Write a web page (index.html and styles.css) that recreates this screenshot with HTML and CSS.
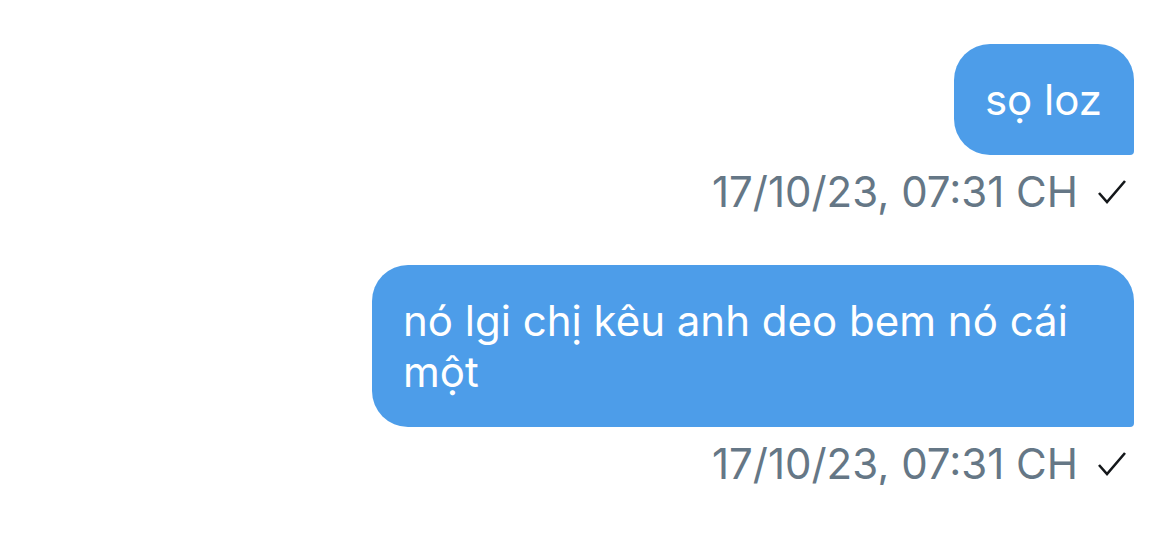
FILE: index.html
```html
<!DOCTYPE html>
<html lang="vi">
<head>
    <meta charset="UTF-8">
    <meta name="viewport" content="width=device-width, initial-scale=1.0">
    <title>Tin nhắn</title>
    <link rel="stylesheet" href="styles.css">
</head>
<body>
    <div class="chat">
        <div class="message">
            <div class="bubble">sọ loz</div>
            <div class="meta">
                <span class="time">17/10/23, 07:31 CH</span>
                <svg class="check" viewBox="0 0 28 26" width="28" height="26"><path d="M1 14 L9 23 L27 2" fill="none" stroke="#14171a" stroke-width="2.6"/></svg>
            </div>
        </div>
        <div class="message">
            <div class="bubble">nó lgi chị kêu anh deo bem nó cái một</div>
            <div class="meta">
                <span class="time">17/10/23, 07:31 CH</span>
                <svg class="check" viewBox="0 0 28 26" width="28" height="26"><path d="M1 14 L9 23 L27 2" fill="none" stroke="#14171a" stroke-width="2.6"/></svg>
            </div>
        </div>
    </div>
</body>
</html>
```

FILE: styles.css
```css
body {
    margin: 0;
    padding: 0;
    background: #fff;
    font-family: 'Inter', 'Noto Sans', sans-serif;
}
.chat {
    display: flex;
    flex-direction: column;
    align-items: flex-end;
    padding: 44px 36px 0 0;
    gap: 52px;
}
.message {
    display: flex;
    flex-direction: column;
    align-items: flex-end;
}
.bubble {
    background-color: #4d9de9;
    color: #fff;
    font-size: 42px;
    line-height: 51px;
    padding: 30px 32px 30px 31px;
    border-radius: 36px 36px 4px 36px;
    max-width: 699px;
}
.meta {
    display: flex;
    align-items: center;
    gap: 20px;
    margin-top: 16px;
    margin-right: 8px;
}
.time {
    color: #657786;
    font-size: 42px;
    line-height: 42px;
}
.check {
    display: block;
}
```
